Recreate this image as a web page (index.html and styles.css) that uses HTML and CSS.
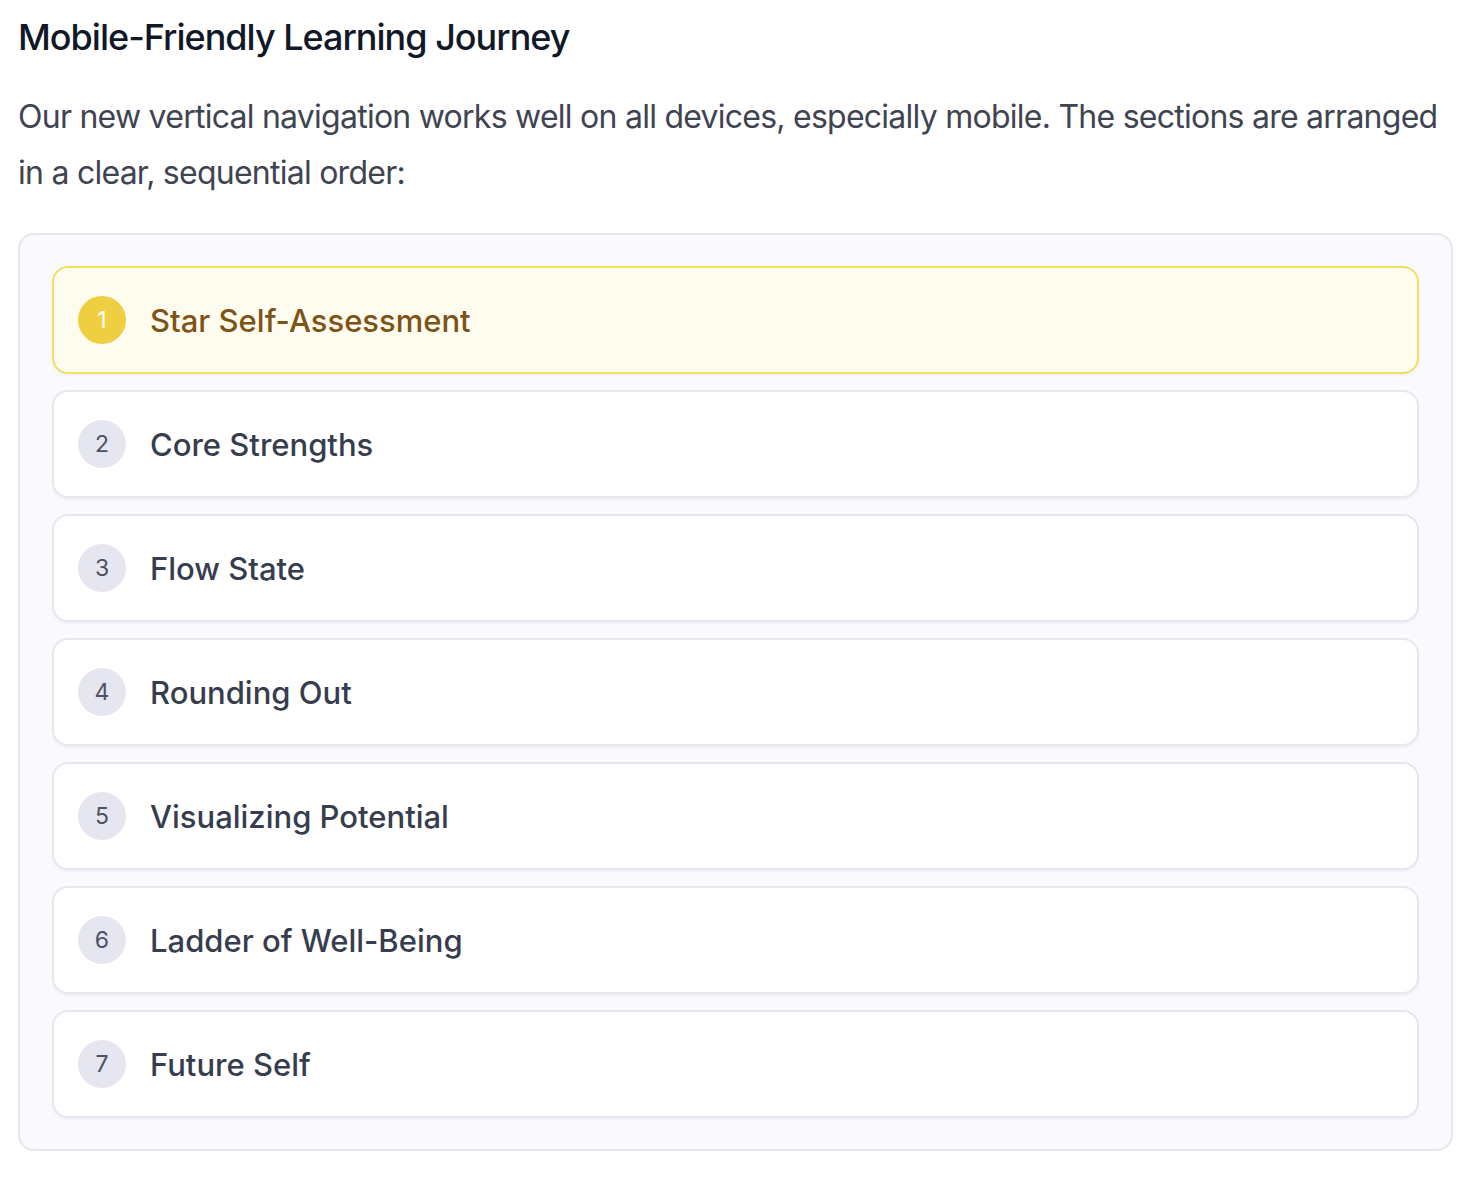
FILE: index.html
```html
<!DOCTYPE html>
<html lang="en">
<head>
<meta charset="utf-8">
<title>Mobile-Friendly Learning Journey</title>
<link rel="stylesheet" href="styles.css">
</head>
<body>
<main class="page">
  <h2 class="title">Mobile-Friendly Learning Journey</h2>
  <p class="intro">Our new vertical navigation works well on all devices, especially mobile. The sections are arranged in a clear, sequential order:</p>
  <nav class="journey">
    <div class="step step-active"><span class="num">1</span><span class="label">Star Self-Assessment</span></div>
    <div class="step"><span class="num">2</span><span class="label">Core Strengths</span></div>
    <div class="step"><span class="num">3</span><span class="label">Flow State</span></div>
    <div class="step"><span class="num">4</span><span class="label">Rounding Out</span></div>
    <div class="step"><span class="num">5</span><span class="label">Visualizing Potential</span></div>
    <div class="step"><span class="num">6</span><span class="label">Ladder of Well-Being</span></div>
    <div class="step"><span class="num">7</span><span class="label">Future Self</span></div>
  </nav>
</main>
</body>
</html>
```

FILE: styles.css
```css
* { box-sizing: border-box; }
html, body { margin: 0; padding: 0; background: #ffffff; }
body {
  font-family: Inter, "Noto Sans", "Liberation Sans", sans-serif;
  color: #374151;
}
.page {
  padding: 10px 15px 0 18px;
}
.title {
  margin: 0 0 25px 0;
  font-size: 36px;
  line-height: 54px;
  font-weight: 500;
  color: #111827;
  letter-spacing: -1px;
}
.intro {
  margin: 0 0 32px 0;
  font-size: 32px;
  line-height: 56px;
  color: #3f4451;
  font-weight: 400;
  letter-spacing: -0.75px;
}
.journey {
  display: flex;
  flex-direction: column;
  gap: 16px;
  background: #f9f9fe;
  border: 2px solid #e6e6ec;
  border-radius: 16px;
  padding: 31px 32px 31px 32px;
}
.step {
  display: flex;
  align-items: center;
  gap: 24px;
  height: 108px;
  padding: 0 24px;
  background: #ffffff;
  border: 2px solid #e6e6ed;
  border-radius: 16px;
  box-shadow: 0 2px 3px rgba(17, 24, 39, 0.04);
}
.num {
  flex: none;
  width: 48px;
  height: 48px;
  border-radius: 50%;
  background: #e6e6f0;
  color: #4b5263;
  display: flex;
  align-items: center;
  justify-content: center;
  font-size: 23px;
  font-weight: 400;
}
.label {
  font-size: 31px;
  font-weight: 500;
  color: #363d4e;
}
.step-active {
  background: #fefcee;
  border-color: #f5de5c;
}
.step-active .num {
  background: #efcf42;
  color: #ffffff;
}
.step-active .label {
  color: #7f5215;
}
```
